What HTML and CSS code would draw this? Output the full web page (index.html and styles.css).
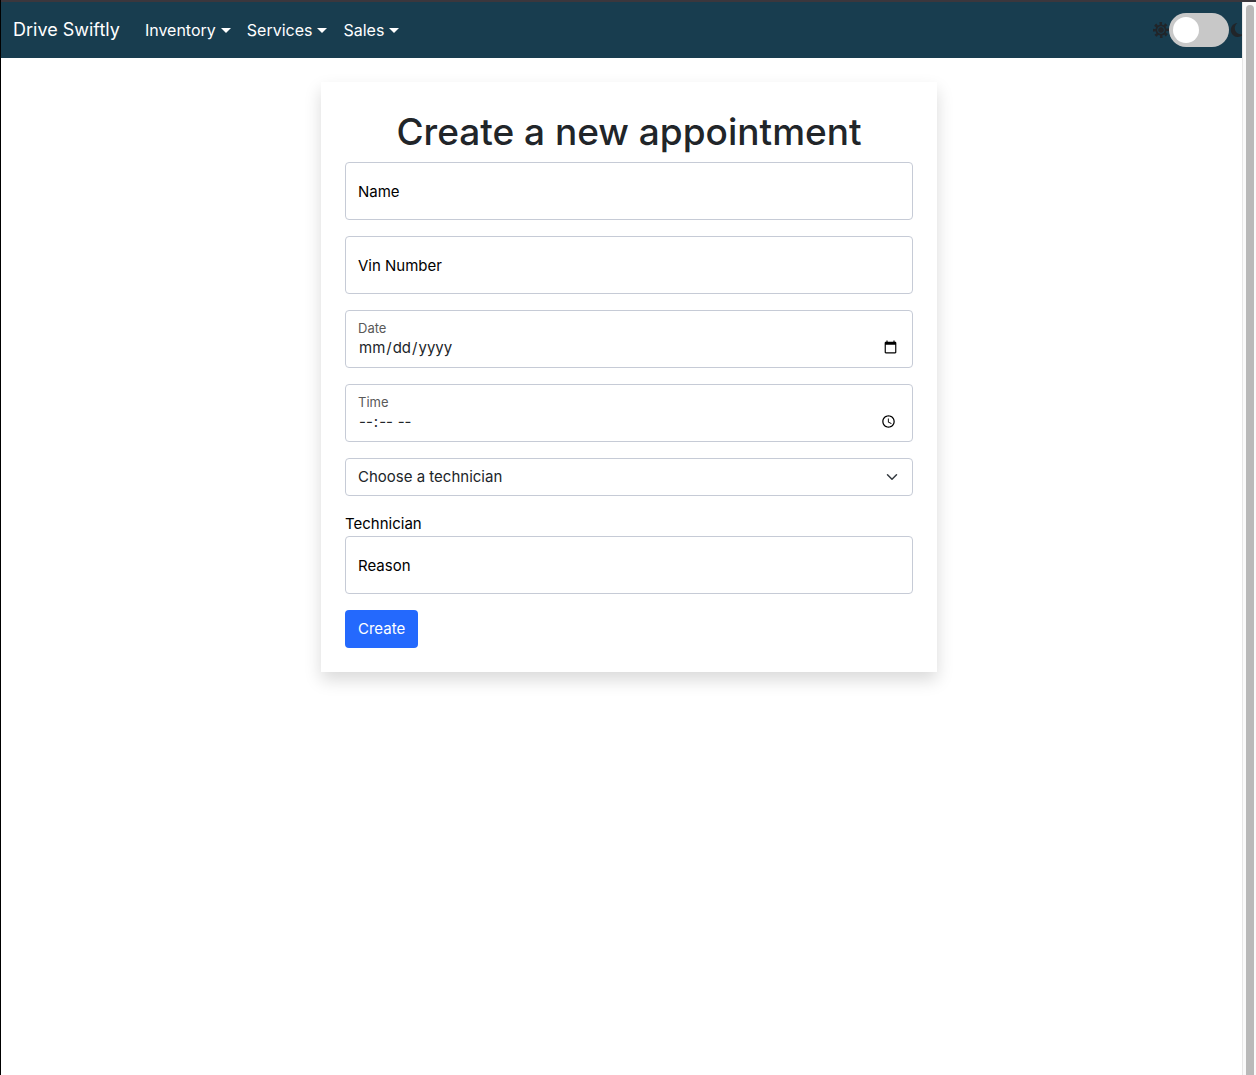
FILE: index.html
```html
<!DOCTYPE html>
<html lang="en-US">
<head>
  <meta charset="utf-8">
  <meta name="viewport" content="width=device-width, initial-scale=1">
  <title>Drive Swiftly</title>
  <link rel="stylesheet" href="styles.css">
</head>
<body>
  <nav class="navbar">
    <a class="brand" href="#">Drive Swiftly</a>
    <div class="nav-links">
      <a class="nav-link" href="#">Inventory</a>
      <a class="nav-link" href="#">Services</a>
      <a class="nav-link" href="#">Sales</a>
    </div>
    <div class="theme">
      <svg class="theme-icon" viewBox="0 0 16 16" aria-hidden="true">
        <circle cx="8" cy="8" r="5.600"/>
        <circle class="sun-rays" cx="8" cy="8" r="6.500" pathLength="80"/>
        <circle class="sun-ring" cx="8" cy="8" r="3.400"/>
      </svg>
      <input class="switch" type="checkbox" role="switch" aria-label="Dark theme">
      <svg class="theme-icon" viewBox="0 0 16 16" aria-hidden="true"><path d="M8.500 1A7 7 0 1 0 14.500 12A6.300 6.300 0 0 1 8.500 1Z"/></svg>
    </div>
  </nav>

  <main class="page">
    <section class="card">
      <h1 class="title">Create a new appointment</h1>
      <form class="form">
        <div class="field">
          <input class="control" id="name" type="text">
          <label class="label" for="name">Name</label>
        </div>
        <div class="field">
          <input class="control" id="vin" type="text">
          <label class="label" for="vin">Vin Number</label>
        </div>
        <div class="field">
          <input class="control control-filled" id="date" type="date">
          <label class="label label-small" for="date">Date</label>
        </div>
        <div class="field">
          <input class="control control-filled" id="time" type="time">
          <label class="label label-small" for="time">Time</label>
        </div>
        <div class="field">
          <select class="select" id="technician">
            <option>Choose a technician</option>
          </select>
          <svg class="chevron" viewBox="0 0 16 16" aria-hidden="true"><path d="m2 5 6 6 6-6"/></svg>
        </div>
        <label class="plain-label" for="technician">Technician</label>
        <div class="field">
          <input class="control" id="reason" type="text">
          <label class="label" for="reason">Reason</label>
        </div>
        <button class="button" type="submit">Create</button>
      </form>
    </section>
  </main>

  <div class="scrollbar" aria-hidden="true"><div class="thumb"></div></div>
</body>
</html>
```
FILE: styles.css
```css
* {
  box-sizing: border-box;
}

body {
  margin: 0;
  min-height: 100vh;
  overflow: hidden;
  border-left: 1px solid #000;
  background: #fff;
  color: #212529;
  font-family: Inter, "Liberation Sans", sans-serif;
  font-size: 15px;
  line-height: 24px;
}

.navbar {
  display: flex;
  align-items: center;
  height: 58px;
  padding: 0 11px 0 12px;
  border-top: 2px solid #3b373d;
  background: #183d4f;
}

.brand {
  margin-right: 17px;
  color: #fff;
  font-size: 18px;
  text-decoration: none;
}

.nav-links {
  display: flex;
  flex: 1;
}

.nav-link {
  display: flex;
  align-items: center;
  gap: 5px;
  padding: 8px;
  color: #fff;
  font-size: 16px;
  text-decoration: none;
}

.nav-link::after {
  content: "";
  border-top: 5px solid;
  border-right: 5px solid transparent;
  border-left: 5px solid transparent;
}

.theme {
  display: flex;
  align-items: center;
}

.theme-icon {
  width: 16px;
  height: 16px;
  fill: #212529;
}

.sun-rays {
  fill: none;
  stroke: #212529;
  stroke-width: 3;
  stroke-dasharray: 5 5;
  stroke-dashoffset: 3;
}

.sun-ring {
  fill: none;
  stroke: #183d4f;
  stroke-width: 1;
}

.switch {
  display: flex;
  align-items: center;
  appearance: none;
  width: 60px;
  height: 34px;
  margin: 0;
  padding: 0 4px;
  border-radius: 17px;
  background: #c8c8c8;
}

.switch::before {
  content: "";
  width: 26px;
  height: 26px;
  border-radius: 50%;
  background: #fff;
}

.switch:checked {
  justify-content: flex-end;
}

.page {
  padding: 24px 11px 24px 12px;
}

.card {
  width: 50%;
  margin: 0 auto;
  padding: 24px;
  box-shadow: 0 8px 16px rgba(0, 0, 0, 0.15);
}

.title {
  margin: 0 0 4px;
  font-size: 37px;
  font-weight: 500;
  line-height: 52px;
  text-align: center;
}

.form {
  display: flex;
  flex-direction: column;
}

.field {
  position: relative;
  margin-bottom: 16px;
}

.control,
.select {
  display: block;
  width: 100%;
  padding: 0 12px;
  border: 1px solid #c6cbd6;
  border-radius: 4px;
  background: #fff;
  color: #212529;
  font: inherit;
}

.control {
  height: 58px;
}

.control-filled {
  padding-top: 17px;
}

.label {
  position: absolute;
  top: 18px;
  left: 13px;
  color: #000;
}

.label-small {
  top: 6px;
  color: #595959;
  font-size: 13px;
}

.select {
  appearance: none;
  height: 38px;
}

.chevron {
  position: absolute;
  top: 13px;
  right: 15px;
  width: 12px;
  height: 12px;
  fill: none;
  stroke: #343a40;
  stroke-width: 2;
  stroke-linecap: round;
  stroke-linejoin: round;
}

.plain-label {
  color: #000;
}

.button {
  align-self: flex-start;
  height: 38px;
  padding: 0 13px;
  border: 0;
  border-radius: 4px;
  background: #2469fd;
  color: #fff;
  font: inherit;
}

.scrollbar {
  position: fixed;
  top: 2px;
  right: 0;
  bottom: 0;
  width: 14px;
  padding: 3px 2px 0 3px;
  border-left: 1px solid #e7e7e7;
  background: #fafafa;
}

.thumb {
  height: 100%;
  border-radius: 4px 4px 0 0;
  background: #b9b9b9;
}
```
